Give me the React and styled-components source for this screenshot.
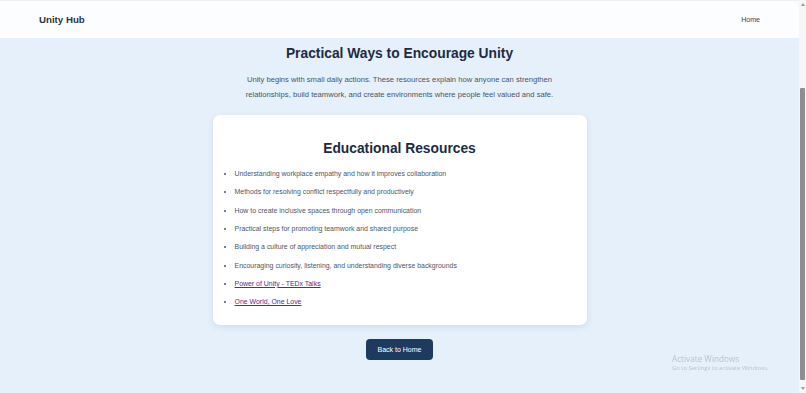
import React from 'react';
import styled, { createGlobalStyle } from 'styled-components';

const GlobalStyle = createGlobalStyle`
  body {
    margin: 0;
    padding-right: 7px;
    background: #e6f0fa;
    font-family: "Liberation Sans", Arial, sans-serif;
    color: #1c2b45;
  }
`;

const Header = styled.header`
  height: 38px;
  padding: 0 39px;
  display: flex;
  align-items: center;
  justify-content: space-between;
  background: #fcfdfe;
  border-top: 1px solid #eef0f3;
  box-sizing: border-box;
`;

const Brand = styled.div`
  font-size: 9.7px;
  font-weight: 700;
  color: #2a3447;
`;

const NavLink = styled.a`
  font-size: 7px;
  color: #34415a;
  text-decoration: none;
`;

const Main = styled.main`
  display: flex;
  flex-direction: column;
  align-items: center;
  padding: 7.7px 0 30px;
`;

const Title = styled.h2`
  margin: 0;
  font-size: 13.8px;
  line-height: 16.6px;
  font-weight: 700;
  color: #1c2b45;
`;

const Intro = styled.p`
  margin: 10px 0 12.5px;
  max-width: 330px;
  font-size: 7.65px;
  line-height: 15px;
  text-align: center;
  color: #4b5563;
`;

const Card = styled.section`
  width: 374px;
  box-sizing: border-box;
  padding: 26.7px 14px 11px;
  background: #ffffff;
  border-radius: 7px;
  box-shadow: 0 2px 6px rgba(30, 50, 80, 0.1);
  text-align: center;
`;

const List = styled.ul`
  margin: 10px 0 0;
  padding-left: 8px;
  text-align: left;
`;

const Item = styled.li`
  font-size: 6.95px;
  line-height: 11px;
  margin-bottom: 7.3px;
  color: #4a5568;
`;

const ItemLink = styled.a`
  color: #5b2a86;
  text-decoration: underline;
`;

const BackButton = styled.button`
  margin-top: 14px;
  height: 21px;
  padding: 0 11.2px;
  border: none;
  border-radius: 4px;
  background: #1e3a5f;
  color: #ffffff;
  font-family: inherit;
  font-size: 7px;
  cursor: pointer;
`;

const Watermark = styled.div`
  position: fixed;
  left: 672px;
  top: 353px;
  color: #b9c2cc;
  font-family: "Open Sans", "Liberation Sans", sans-serif;
  pointer-events: none;
`;

const WatermarkTitle = styled.div`
  font-size: 8.2px;
  line-height: 11px;
`;

const WatermarkSub = styled.div`
  font-size: 5.9px;
  line-height: 9px;
`;

/* drawing of the window scrollbar seen at the right edge of the reference */
const ScrollRail = styled.div`
  position: fixed;
  top: 0;
  right: 0;
  width: 7px;
  height: 100vh;
  background: #f6f6f6;
  display: flex;
  flex-direction: column;
  align-items: center;
  justify-content: space-between;
  padding: 3px 0;
  box-sizing: border-box;
`;

const Arrow = styled.span`
  width: 0;
  height: 0;
  border-left: 2px solid transparent;
  border-right: 2px solid transparent;
  ${(p) => (p.down ? 'border-top: 3px solid #9a9a9a;' : 'border-bottom: 3px solid #9a9a9a;')}
`;

const Thumb = styled.span`
  position: absolute;
  top: 88px;
  left: 1px;
  width: 5px;
  height: 292px;
  border-radius: 1px;
  background: #8e8e8e;
`;

const topics = [
  'Understanding workplace empathy and how it improves collaboration',
  'Methods for resolving conflict respectfully and productively',
  'How to create inclusive spaces through open communication',
  'Practical steps for promoting teamwork and shared purpose',
  'Building a culture of appreciation and mutual respect',
  'Encouraging curiosity, listening, and understanding diverse backgrounds',
];

const links = ['Power of Unity - TEDx Talks', 'One World, One Love'];

export default function App() {
  return (
    <>
      <GlobalStyle />
      <Header>
        <Brand>Unity Hub</Brand>
        <NavLink href="#home">Home</NavLink>
      </Header>
      <Main>
        <Title>Practical Ways to Encourage Unity</Title>
        <Intro>
          Unity begins with small daily actions. These resources explain how anyone can
          strengthen relationships, build teamwork, and create environments where people
          feel valued and safe.
        </Intro>
        <Card>
          <Title>Educational Resources</Title>
          <List>
            {topics.map((t) => (
              <Item key={t}>{t}</Item>
            ))}
            {links.map((l) => (
              <Item key={l}>
                <ItemLink href="#resource">{l}</ItemLink>
              </Item>
            ))}
          </List>
        </Card>
        <BackButton type="button">Back to Home</BackButton>
      </Main>
      <Watermark>
        <WatermarkTitle>Activate Windows</WatermarkTitle>
        <WatermarkSub>Go to Settings to activate Windows.</WatermarkSub>
      </Watermark>
      <ScrollRail>
        <Arrow />
        <Thumb />
        <Arrow down />
      </ScrollRail>
    </>
  );
}
